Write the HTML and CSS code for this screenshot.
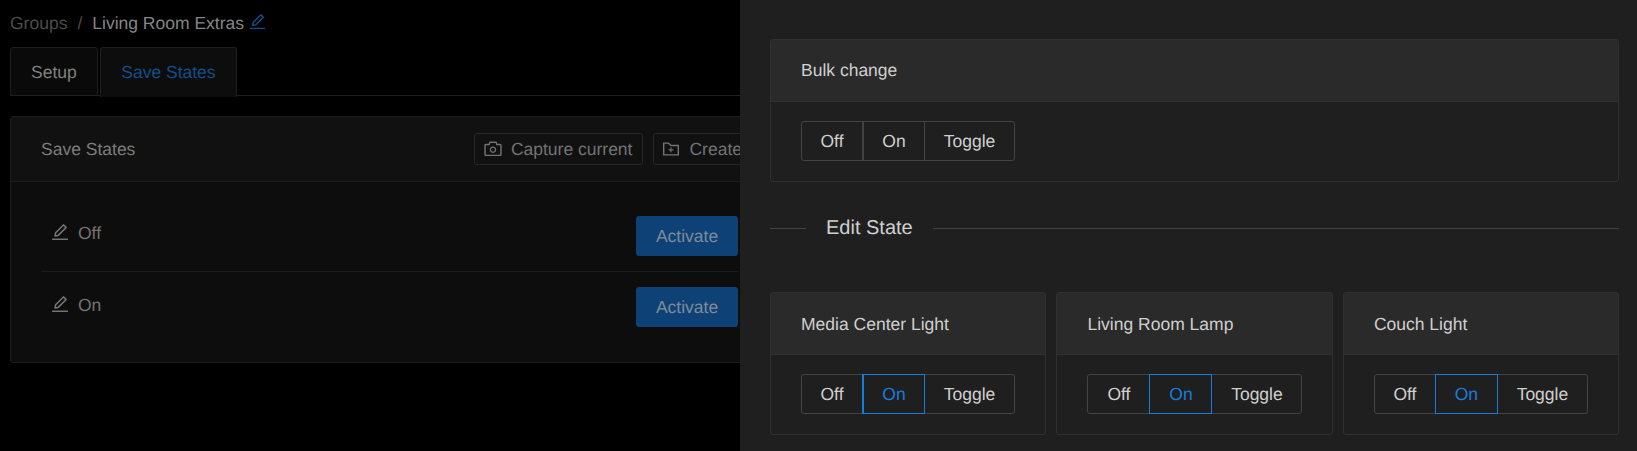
FILE: index.html
```html
<!DOCTYPE html>
<html>
<head>
    <title>Living Room Extras</title>
    <link rel="stylesheet" href="styles.css">
</head>
<body>
    <svg class="icon-defs" aria-hidden="true">
        <symbol id="icon-edit" viewBox="64 64 896 896"><path d="M257.7 752c2 0 4-.2 6-.5L431.9 722c2-.4 3.9-1.3 5.3-2.8l423.9-423.9a9.96 9.96 0 0 0 0-14.1L694.9 114.9c-1.9-1.9-4.4-2.9-7.1-2.9s-5.2 1-7.1 2.9L256.8 538.8c-1.5 1.5-2.4 3.3-2.8 5.3l-29.5 168.2a33.5 33.5 0 0 0 9.4 29.8c6.6 6.4 14.9 9.9 23.8 9.9zm67.4-174.4L687.8 215l73.3 73.3-362.7 362.6-88.9 15.7 15.6-89zM880 836H144c-17.7 0-32 14.3-32 32v36c0 4.4 3.6 8 8 8h784c4.4 0 8-3.6 8-8v-36c0-17.7-14.3-32-32-32z"/></symbol>
        <symbol id="icon-camera" viewBox="64 64 896 896"><path d="M864 248H728l-32.4-90.8a32.07 32.07 0 0 0-30.2-21.2H358.6c-13.5 0-25.6 8.5-30.1 21.2L296 248H160c-44.2 0-80 35.8-80 80v456c0 44.2 35.8 80 80 80h704c44.2 0 80-35.8 80-80V328c0-44.2-35.8-80-80-80zm8 536c0 4.4-3.6 8-8 8H160c-4.4 0-8-3.6-8-8V328c0-4.4 3.6-8 8-8h186.7l17.1-47.8 22.9-64.2h250.5l22.9 64.2 17.1 47.8H864c4.4 0 8 3.6 8 8v456zM512 384c-88.4 0-160 71.6-160 160s71.6 160 160 160 160-71.6 160-160-71.6-160-160-160zm0 256c-53 0-96-43-96-96s43-96 96-96 96 43 96 96-43 96-96 96z"/></symbol>
        <symbol id="icon-folder-add" viewBox="64 64 896 896"><path d="M484 443.1V528h-84.5c-4.1 0-7.5 3.1-7.5 7v42c0 3.8 3.4 7 7.5 7H484v84.9c0 3.9 3.2 7.1 7 7.1h42c3.9 0 7-3.2 7-7.1V584h84.5c4.1 0 7.5-3.2 7.5-7v-42c0-3.9-3.4-7-7.5-7H540v-84.9c0-3.9-3.1-7.1-7-7.1h-42c-3.8 0-7 3.2-7 7.1zm396-144.7H521L403.7 186.2a8.15 8.15 0 0 0-5.5-2.2H144c-17.7 0-32 14.3-32 32v592c0 17.7 14.3 32 32 32h736c17.7 0 32-14.3 32-32V330.4c0-17.7-14.3-32-32-32zM840 768H184V256h188.5l119.6 114.4H840V768z"/></symbol>
    </svg>

    <div class="page">
        <div class="breadcrumb">
            <span class="crumb-link">Groups</span>
            <span class="crumb-sep">/</span>
            <span class="crumb-current">Living Room Extras</span>
            <svg class="crumb-edit"><use href="#icon-edit"/></svg>
        </div>

        <div class="tabs">
            <div class="tab">Setup</div>
            <div class="tab tab-active">Save States</div>
        </div>

        <div class="states-card">
            <div class="states-head">
                <span class="states-title">Save States</span>
                <div class="states-actions">
                    <span class="small-btn"><svg class="small-btn-icon"><use href="#icon-camera"/></svg>Capture current</span>
                    <span class="small-btn"><svg class="small-btn-icon"><use href="#icon-folder-add"/></svg>Create</span>
                </div>
            </div>
            <div class="states-body">
                <div class="state-row">
                    <span class="state-name"><svg class="state-edit"><use href="#icon-edit"/></svg>Off</span>
                    <span class="activate-btn">Activate</span>
                </div>
                <div class="state-row">
                    <span class="state-name"><svg class="state-edit"><use href="#icon-edit"/></svg>On</span>
                    <span class="activate-btn">Activate</span>
                </div>
            </div>
        </div>
    </div>

    <div class="drawer">
        <div class="card">
            <div class="card-head">Bulk change</div>
            <div class="card-body">
                <div class="btn-group">
                    <span class="seg seg-first">Off</span>
                    <span class="seg seg-thick">On</span>
                    <span class="seg seg-last">Toggle</span>
                </div>
            </div>
        </div>

        <div class="divider">
            <span class="divider-text">Edit State</span>
        </div>

        <div class="card-grid">
            <div class="card">
                <div class="card-head">Media Center Light</div>
                <div class="card-body">
                    <div class="btn-group">
                        <span class="seg seg-first">Off</span>
                        <span class="seg seg-thick seg-on">On</span>
                        <span class="seg seg-last">Toggle</span>
                    </div>
                </div>
            </div>
            <div class="card">
                <div class="card-head">Living Room Lamp</div>
                <div class="card-body">
                    <div class="btn-group">
                        <span class="seg seg-first seg-wide">Off</span>
                        <span class="seg seg-on">On</span>
                        <span class="seg seg-last">Toggle</span>
                    </div>
                </div>
            </div>
            <div class="card">
                <div class="card-head">Couch Light</div>
                <div class="card-body">
                    <div class="btn-group">
                        <span class="seg seg-first">Off</span>
                        <span class="seg seg-on">On</span>
                        <span class="seg seg-last">Toggle</span>
                    </div>
                </div>
            </div>
        </div>
    </div>
</body>
</html>
```

FILE: styles.css
```css
html, body {
    height: 100%;
}
body {
    margin: 0;
    overflow: hidden;
    background-color: #000;
    font-family: "Liberation Sans", Arial, sans-serif;
    font-size: 17.5px;
    text-rendering: geometricPrecision;
}
.icon-defs {
    display: none;
}
svg {
    fill: currentColor;
}

/* page under the mask */
.page {
    width: 759px;
    padding: 0 10px;
}
.breadcrumb {
    display: flex;
    align-items: center;
    height: 47px;
    color: #4d4d4d;
}
.crumb-sep {
    margin: 0 10px;
}
.crumb-current {
    color: #858585;
}
.crumb-edit {
    width: 17px;
    height: 17px;
    margin: -4px 0 0 5px;
    color: #124f88;
}
.tabs {
    display: flex;
    gap: 2px;
    height: 48px;
    border-bottom: 1px solid #1f1f1f;
}
.tab {
    height: 47px;
    padding: 0 20px;
    line-height: 48px;
    color: #808080;
    background: #0a0a0a;
    border: 1px solid #1f1f1f;
    border-radius: 3px 3px 0 0;
}
.tab-active {
    height: 49px;
    padding: 0 20.5px;
    color: #124f88;
    background: #0d0d0d;
    border-bottom: 0;
}
.states-card {
    margin-top: 20px;
    background: #0d0d0d;
    border: 1px solid #1c1c1c;
    border-radius: 3px;
}
.states-head {
    display: flex;
    align-items: center;
    justify-content: space-between;
    height: 64px;
    padding: 0 15px 0 30px;
    background: #111;
    border-bottom: 1px solid #1c1c1c;
    color: #7d7d7d;
}
.states-title {
    padding-top: 1px;
}
.states-actions {
    display: flex;
    gap: 10px;
}
.small-btn {
    display: flex;
    align-items: center;
    height: 30px;
    padding: 0 10px 0 9px;
    color: #737373;
    border: 1px solid #262626;
    border-radius: 3px;
}
.small-btn + .small-btn {
    padding-left: 8px;
}
.small-btn-icon {
    width: 18px;
    height: 18px;
    margin-right: 9px;
}
.states-body {
    padding: 19px 30px 20px;
}
.state-row {
    display: flex;
    justify-content: space-between;
    height: 71px;
    padding: 15px 0 0 10px;
    box-sizing: border-box;
    border-bottom: 1px solid #1c1c1c;
}
.state-row:last-child {
    height: 70px;
    border-bottom: 0;
}
.state-row:last-child .state-name {
    height: 36px;
}
.state-name {
    display: flex;
    align-items: center;
    height: 34px;
    color: #737373;
}
.state-edit {
    width: 18px;
    height: 18px;
    margin: -2px 9px 0 0;
}
.activate-btn {
    width: 102px;
    height: 40px;
    line-height: 40px;
    text-align: center;
    color: #7d8b99;
    background: #0e4277;
    border-radius: 3px;
}

/* drawer */
.drawer {
    position: absolute;
    top: 0;
    left: 740px;
    right: 0;
    bottom: 0;
    box-sizing: border-box;
    padding: 39px 18px 0 30px;
    background-color: #1f1f1f;
    color: #cfcfcf;
}
.card {
    border: 1px solid #303030;
    border-radius: 3px;
}
.card-head {
    height: 62px;
    line-height: 60px;
    padding: 0 30px;
    background: #2a2a2a;
    border-bottom: 1px solid #303030;
    box-sizing: border-box;
}
.card-grid .card-head {
    line-height: 62px;
}
.card-body {
    padding: 19px 30px 20px;
}
.btn-group {
    display: flex;
    height: 40px;
}
.seg {
    flex: none;
    box-sizing: border-box;
    width: 62px;
    line-height: 38px;
    text-align: center;
    border: 1px solid #434343;
    margin-left: -1px;
}
.seg-first {
    margin-left: 0;
    border-radius: 3px 0 0 3px;
}
.seg-wide {
    width: 63px;
}
.seg-last {
    width: 91px;
    border-radius: 0 3px 3px 0;
}
.seg-thick {
    border-left-width: 2px;
    width: 63px;
}
.seg-on {
    position: relative;
    width: 63px;
    color: #177ddc;
    border-color: #177ddc;
}
.divider {
    display: flex;
    align-items: center;
    height: 92px;
    margin-bottom: 18px;
    font-size: 20px;
}
.divider::before {
    content: "";
    width: 36px;
    border-top: 1px solid #434343;
}
.divider::after {
    content: "";
    flex: 1;
    border-top: 1px solid #434343;
}
.divider-text {
    padding: 0 20px;
}
.card-grid {
    display: grid;
    grid-template-columns: repeat(3, minmax(0, 1fr));
    gap: 10.4px;
}
```
